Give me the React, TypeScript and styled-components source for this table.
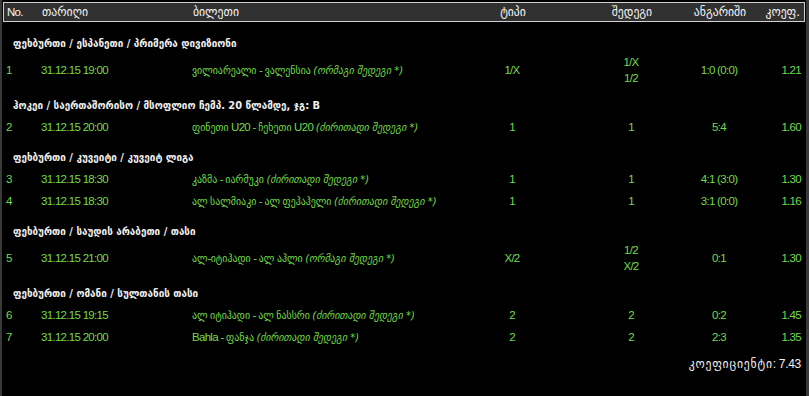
import React from 'react';
import styled, { createGlobalStyle } from 'styled-components';

const GlobalStyle = createGlobalStyle`
    html, body {
        margin: 0;
        padding: 0;
        background: #000;
    }
`;

const GREEN = '#72dc4c';
const COLS = '36px 151px 277px 86px 134px 60px 1fr';
const GEO_FONT = '"DejaVu Sans Condensed", "DejaVu Sans", sans-serif';

interface Bet {
    no: number;
    date: string;
    match: string;
    note: string;
    type: string;
    result: string[];
    score: string;
    coef: string;
}

interface Group {
    title: string;
    bets: Bet[];
}

const MAIN = '(ძირითადი შედეგი *)';
const DOUBLE = '(ორმაგი შედეგი *)';

const groups: Group[] = [
    {
        title: 'ფეხბურთი / ესპანეთი / პრიმერა დივიზიონი',
        bets: [
            { no: 1, date: '31.12.15 19:00', match: 'ვილიარეალი - ვალენსია', note: DOUBLE, type: '1/X', result: ['1/X', '1/2'], score: '1:0 (0:0)', coef: '1.21' },
        ],
    },
    {
        title: 'ჰოკეი / საერთაშორისო / მსოფლიო ჩემპ. 20 წლამდე, ჯგ: B',
        bets: [
            { no: 2, date: '31.12.15 20:00', match: 'ფინეთი U20 - ჩეხეთი U20', note: MAIN, type: '1', result: ['1'], score: '5:4', coef: '1.60' },
        ],
    },
    {
        title: 'ფეხბურთი / კუვეიტი / კუვეიტ ლიგა',
        bets: [
            { no: 3, date: '31.12.15 18:30', match: 'კაზმა - იარმუკი', note: MAIN, type: '1', result: ['1'], score: '4:1 (3:0)', coef: '1.30' },
            { no: 4, date: '31.12.15 18:30', match: 'ალ სალმიაკი - ალ ფეჰაჰელი', note: MAIN, type: '1', result: ['1'], score: '3:1 (0:0)', coef: '1.16' },
        ],
    },
    {
        title: 'ფეხბურთი / საუდის არაბეთი / თასი',
        bets: [
            { no: 5, date: '31.12.15 21:00', match: 'ალ-იტიჰადი - ალ აჰლი', note: DOUBLE, type: 'X/2', result: ['1/2', 'X/2'], score: '0:1', coef: '1.30' },
        ],
    },
    {
        title: 'ფეხბურთი / ომანი / სულთანის თასი',
        bets: [
            { no: 6, date: '31.12.15 19:15', match: 'ალ იტიჰადი - ალ ნასსრი', note: MAIN, type: '2', result: ['2'], score: '0:2', coef: '1.45' },
            { no: 7, date: '31.12.15 20:00', match: 'Bahla - ფანჯა', note: MAIN, type: '2', result: ['2'], score: '2:3', coef: '1.35' },
        ],
    },
];

const Page = styled.div`
    width: 809px;
    height: 396px;
    box-sizing: border-box;
    background: #000;
    border-left: 2px solid #3a3a3a;
    border-right: 3px solid #3a3a3a;
    padding: 2px 1px 0 1px;
    font-family: "Liberation Sans", Arial, sans-serif;
    font-size: 11.5px;
    letter-spacing: -0.7px;
    color: ${GREEN};
`;

const HeaderBar = styled.div`
    display: grid;
    grid-template-columns: ${COLS};
    height: 20px;
    box-sizing: border-box;
    align-items: center;
    padding: 0 4px 0 2px;
    background: #313131;
    border: 1px solid #d0d0d0;
    color: #f4f4f4;
`;

const Row = styled.div<{ $tall?: boolean }>`
    display: grid;
    grid-template-columns: ${COLS};
    height: ${p => (p.$tall ? 32 : 22)}px;
    align-items: center;
    padding: 0 4px 0 2px;
`;

const Cell = styled.div<{ $align?: 'left' | 'center' | 'right'; $pad?: number }>`
    text-align: ${p => p.$align || 'left'};
    padding-left: ${p => p.$pad || 0}px;
    white-space: nowrap;
    line-height: 16px;
`;

const Geo = styled.span<{ $size?: number; $spacing?: number }>`
    font-family: ${GEO_FONT};
    font-size: ${p => p.$size || 11}px;
    letter-spacing: ${p => p.$spacing || 0}px;
`;

const Note = styled(Geo)`
    font-style: italic;
`;

const GroupTitle = styled.div<{ $first?: boolean }>`
    height: 20px;
    line-height: 20px;
    margin-top: ${p => (p.$first ? 12 : 10)}px;
    padding-left: 10px;
    color: #f0f0f0;
    font-family: ${GEO_FONT};
    font-size: 11px;
    font-weight: bold;
    letter-spacing: 0;
`;

const Total = styled.div`
    margin-top: 6px;
    height: 20px;
    line-height: 20px;
    text-align: right;
    padding-right: 4px;
    color: #f0f0f0;
    font-size: 12px;
    letter-spacing: -0.3px;
`;

// georgian bits get their own font, latin + digits stay narrow
function Mixed({ text }: { text: string }) {
    const parts = text.split(/([\u10A0-\u10FF]+)/);
    return (
        <>
            {parts.map((p, i) =>
                /[\u10A0-\u10FF]/.test(p) ? <Geo key={i}>{p}</Geo> : <React.Fragment key={i}>{p}</React.Fragment>
            )}
        </>
    );
}

function BetRow({ bet }: { bet: Bet }) {
    return (
        <Row $tall={bet.result.length > 1}>
            <Cell $pad={1}>{bet.no}</Cell>
            <Cell>{bet.date}</Cell>
            <Cell>
                <Mixed text={bet.match} /> <Note>{bet.note}</Note>
            </Cell>
            <Cell $align="center">{bet.type}</Cell>
            <Cell $align="center" $pad={18}>
                {bet.result.map(r => (
                    <div key={r}>{r}</div>
                ))}
            </Cell>
            <Cell $align="center">{bet.score}</Cell>
            <Cell $align="right">{bet.coef}</Cell>
        </Row>
    );
}

export default function App() {
    return (
        <Page>
            <GlobalStyle />
            <HeaderBar>
                <Cell $pad={1}>No.</Cell>
                <Cell><Geo $size={13}>თარიღი</Geo></Cell>
                <Cell><Geo $size={13}>ბილეთი</Geo></Cell>
                <Cell $align="center"><Geo $size={13}>ტიპი</Geo></Cell>
                <Cell $align="center" $pad={18}><Geo $size={13}>შედეგი</Geo></Cell>
                <Cell $align="center"><Geo $size={13}>ანგარიში</Geo></Cell>
                <Cell $align="right"><Geo $size={13}>კოეფ.</Geo></Cell>
            </HeaderBar>
            {groups.map((g, gi) => (
                <React.Fragment key={g.title}>
                    <GroupTitle $first={gi === 0}>{g.title}</GroupTitle>
                    {g.bets.map(b => (
                        <BetRow key={b.no} bet={b} />
                    ))}
                </React.Fragment>
            ))}
            <Total>
                <Geo $size={13} $spacing={0.8}>კოეფიციენტი</Geo>: 7.43
            </Total>
        </Page>
    );
}
